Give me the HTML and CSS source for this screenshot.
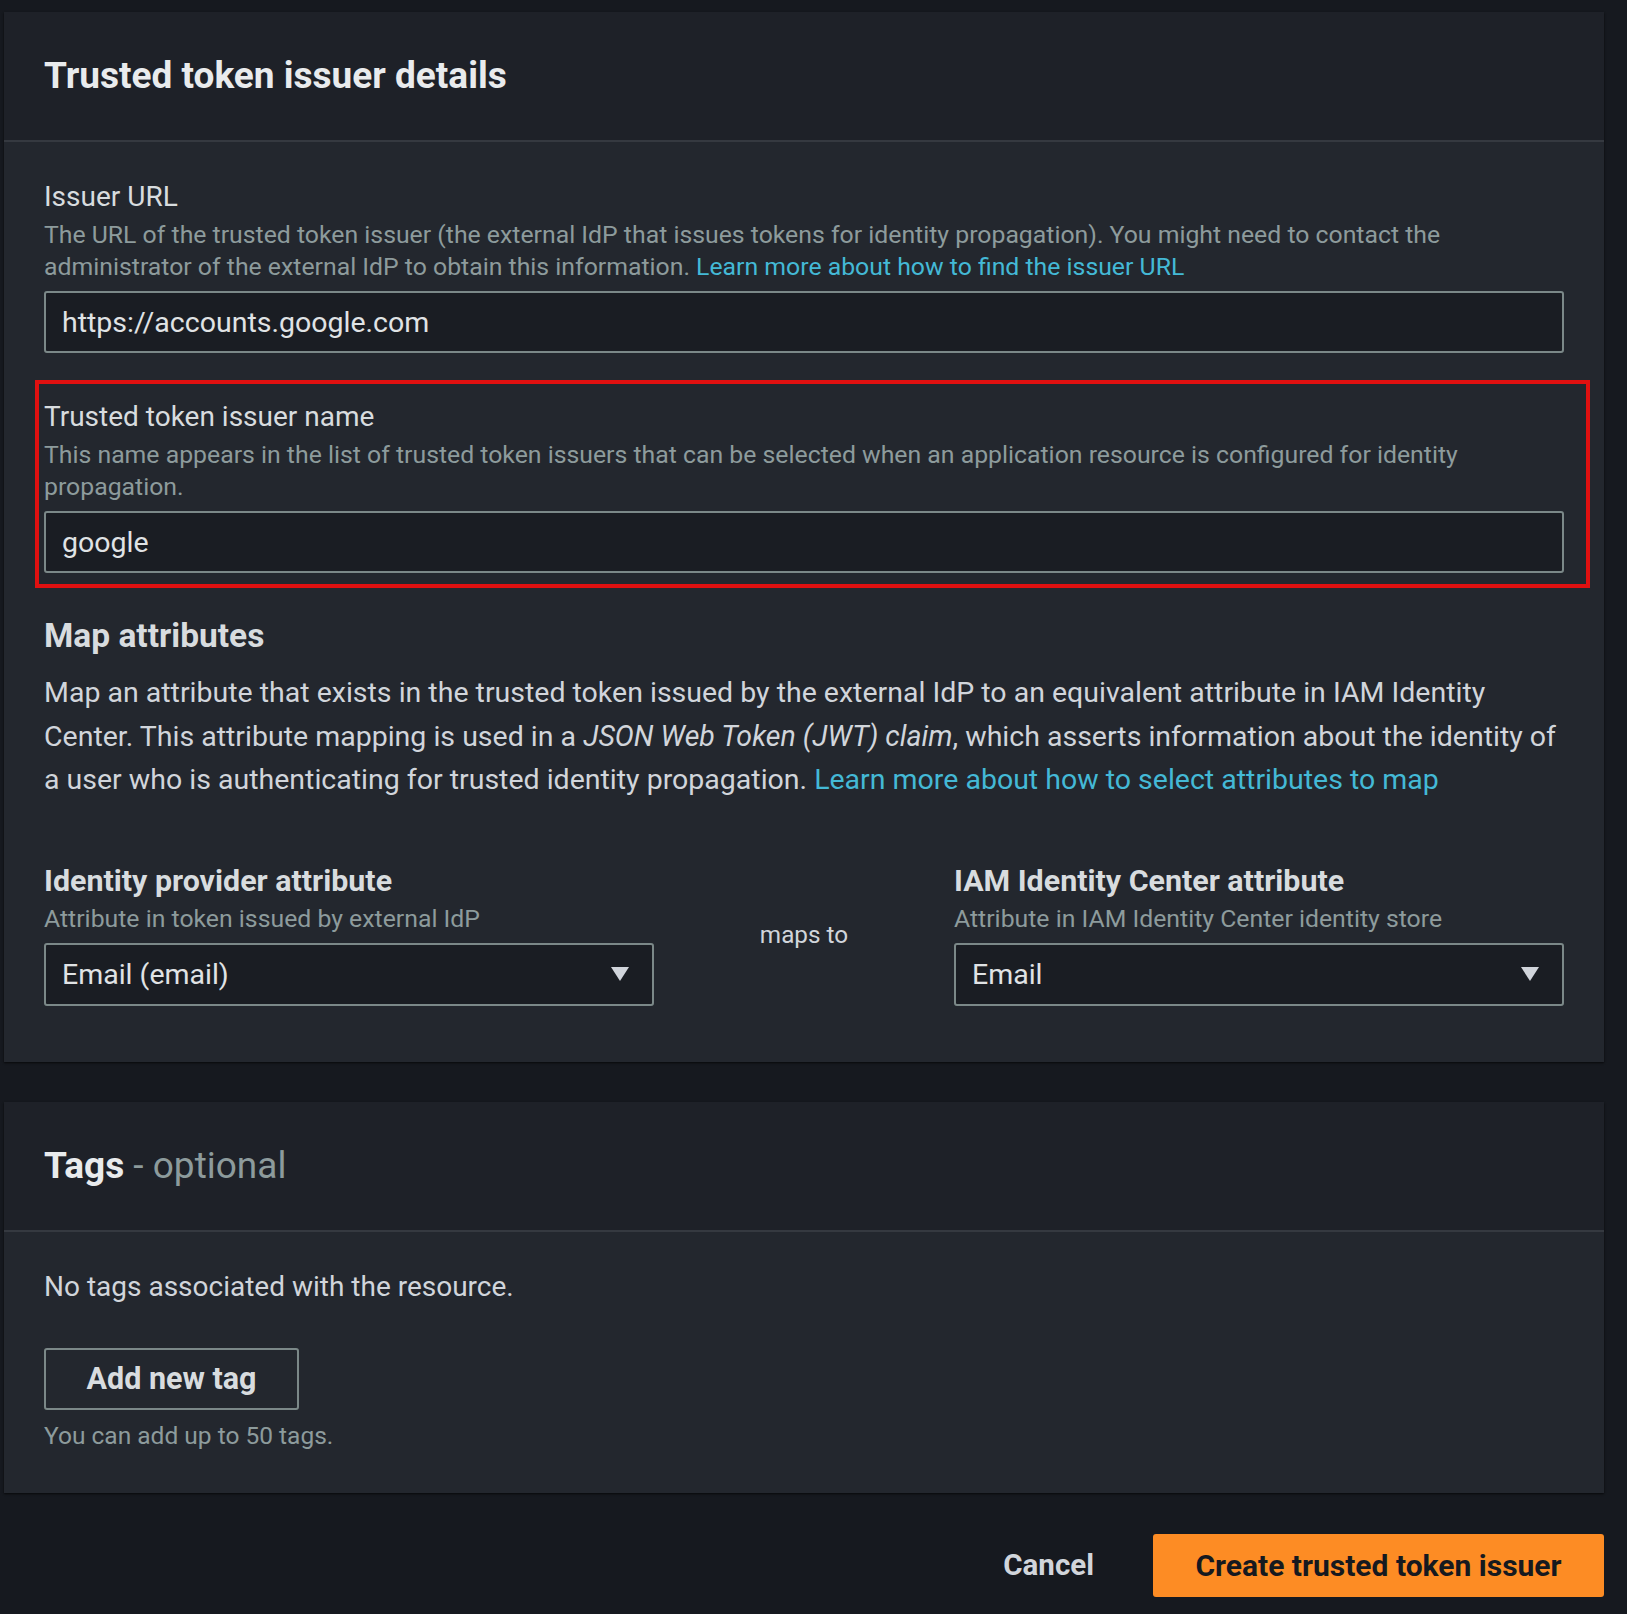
FILE: index.html
```html
<!DOCTYPE html>
<html lang="en">
<head>
<meta charset="utf-8">
<title>Trusted token issuer</title>
<link rel="stylesheet" href="styles.css">
</head>
<body>
<div class="page">
  <section class="card">
    <header class="card-header">
      <h2 class="card-title">Trusted token issuer details</h2>
    </header>
    <div class="card-body">
      <div class="field">
        <div class="field-label">Issuer URL</div>
        <div class="field-desc">The URL of the trusted token issuer (the external IdP that issues tokens for identity propagation). You might need to contact the administrator of the external IdP to obtain this information. <a class="link" href="#">Learn more about how to find the issuer URL</a></div>
        <div class="input">https://accounts.google.com</div>
      </div>
      <div class="field field-highlight">
        <div class="field-label">Trusted token issuer name</div>
        <div class="field-desc">This name appears in the list of trusted token issuers that can be selected when an application resource is configured for identity propagation.</div>
        <div class="input">google</div>
      </div>
      <h3 class="section-title">Map attributes</h3>
      <p class="section-text">Map an attribute that exists in the trusted token issued by the external IdP to an equivalent attribute in IAM Identity Center. This attribute mapping is used in a <em>JSON Web Token (JWT) claim</em>, which asserts information about the identity of a user who is authenticating for trusted identity propagation. <a class="link" href="#">Learn more about how to select attributes to map</a></p>
      <div class="map-row">
        <div class="map-col">
          <div class="map-label">Identity provider attribute</div>
          <div class="field-desc">Attribute in token issued by external IdP</div>
          <div class="select">
            <span>Email (email)</span>
            <svg class="caret" width="20" height="16" viewBox="0 0 20 16"><polygon points="1,1 19,1 10,15" fill="#d1d5db"/></svg>
          </div>
        </div>
        <div class="maps-to">maps to</div>
        <div class="map-col">
          <div class="map-label">IAM Identity Center attribute</div>
          <div class="field-desc">Attribute in IAM Identity Center identity store</div>
          <div class="select">
            <span>Email</span>
            <svg class="caret" width="20" height="16" viewBox="0 0 20 16"><polygon points="1,1 19,1 10,15" fill="#d1d5db"/></svg>
          </div>
        </div>
      </div>
    </div>
  </section>

  <section class="card card-tags">
    <header class="card-header">
      <h2 class="card-title">Tags <span class="optional">- optional</span></h2>
    </header>
    <div class="card-body tags-body">
      <p class="tags-empty">No tags associated with the resource.</p>
      <button class="btn-normal">Add new tag</button>
      <div class="field-desc tags-hint">You can add up to 50 tags.</div>
    </div>
  </section>

  <div class="actions">
    <button class="btn-link">Cancel</button>
    <button class="btn-primary">Create trusted token issuer</button>
  </div>
</div>
</body>
</html>
```

FILE: styles.css
```css
* { box-sizing: border-box; }

html, body {
  margin: 0;
  padding: 0;
  background: #16191f;
}

body {
  font-family: Roboto, "Open Sans", sans-serif;
  color: #d1d5db;
}

.page {
  padding: 12px 23px 0 4px;
  height: 1614px;
}

.card {
  background: #23272e;
  box-shadow: 0 1px 2px rgba(0, 0, 0, 0.7);
}

.card-header {
  background: #1e2128;
  border-bottom: 2px solid #353940;
  height: 130px;
  display: flex;
  align-items: center;
  padding: 0 40px;
}

.card-title {
  margin: 0;
  font-size: 37px;
  font-weight: 700;
  color: #e9ebed;
  line-height: 46px;
}

.optional {
  font-weight: 400;
  color: #8d9b9c;
}

.card-body {
  padding: 38px 40px 56px;
}

.field {
  margin-bottom: 47px;
}

.field-label {
  font-size: 28px;
  line-height: 34px;
  color: #d8dcdf;
}

.field-desc {
  font-size: 24.8px;
  line-height: 32px;
  color: #8d9b9c;
  margin-top: 5px;
}

.link {
  color: #44b9d6;
  text-decoration: none;
}

.input,
.select {
  margin-top: 8px;
  height: 62px;
  background: #1a1d23;
  border: 2px solid #7b8888;
  border-radius: 3px;
  display: flex;
  align-items: center;
  padding: 0 16px;
  font-size: 28.5px;
  color: #e0e3e5;
}

.field-highlight {
  position: relative;
  margin-bottom: 43px;
}

.field-highlight::after {
  content: "";
  position: absolute;
  left: -9px;
  right: -26px;
  top: -20px;
  bottom: -15px;
  border: 4px solid #e01010;
  pointer-events: none;
}

.section-title {
  margin: 0;
  font-size: 33.5px;
  line-height: 40px;
  font-weight: 700;
  color: #d8dcdf;
}

.section-text {
  margin: 15px 0 0;
  font-size: 28.5px;
  line-height: 43.6px;
  color: #d1d5db;
}

.map-row {
  margin-top: 61px;
  display: grid;
  grid-template-columns: 610px 1fr 610px;
  align-items: end;
}

.map-label {
  font-size: 30.4px;
  line-height: 36px;
  font-weight: 700;
  color: #d8dcdf;
}

.map-col .field-desc {
  margin-top: 4px;
}

.select {
  height: 63px;
  justify-content: space-between;
  padding-right: 22px;
}

.maps-to {
  align-self: center;
  text-align: center;
  font-size: 24.3px;
  color: #d1d5db;
}

.card-tags {
  margin-top: 40px;
}

.tags-body {
  padding: 37px 40px 41px;
}

.tags-empty {
  margin: 0;
  font-size: 28px;
  line-height: 36px;
  color: #d1d5db;
}

.btn-normal {
  display: block;
  margin-top: 43px;
  width: 255px;
  height: 62px;
  background: transparent;
  border: 2px solid #7b8888;
  border-radius: 3px;
  font-family: inherit;
  font-size: 30.5px;
  font-weight: 700;
  color: #d8dcdf;
  padding: 0;
}

.tags-hint {
  margin-top: 10px;
  font-size: 24.5px;
}

.actions {
  margin-top: 41px;
  display: flex;
  justify-content: flex-end;
  align-items: center;
  gap: 39px;
}

.btn-link {
  background: transparent;
  border: none;
  font-family: inherit;
  font-size: 29.5px;
  font-weight: 700;
  color: #d1d5db;
  padding: 0 20px;
  height: 62px;
}

.btn-primary {
  height: 63px;
  width: 451px;
  background: #fd8c24;
  border: none;
  border-radius: 3px;
  font-family: inherit;
  font-size: 30px;
  font-weight: 700;
  color: #16191f;
  padding: 0;
}
```
